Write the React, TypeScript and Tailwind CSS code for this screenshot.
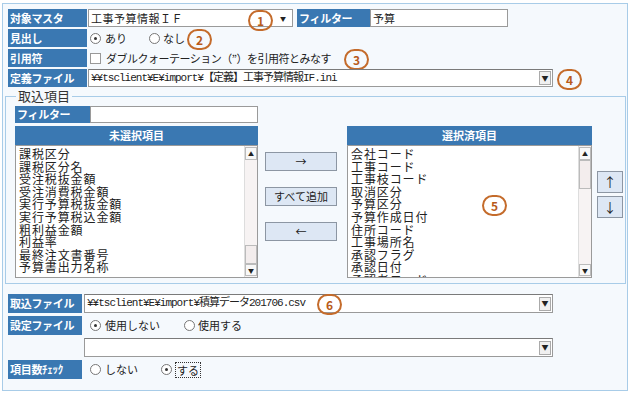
import React from 'react';

const leftItems = [
  '課税区分', '課税区分名', '受注税抜金額', '受注消費税金額', '実行予算税抜金額',
  '実行予算税込金額', '粗利益金額', '利益率', '最終注文書番号', '予算書出力名称',
];

const rightItems = [
  '会社コード', '工事コード', '工事枝コード', '取消区分', '予算区分', '予算作成日付',
  '住所コード', '工事場所名', '承認フラグ', '承認日付', '承認者コード',
];

function Mark({ n, className }: { n: number; className: string }) {
  return (
    <span
      className={`absolute flex h-[21px] w-[25px] items-center justify-center rounded-full border-2 border-[#c46b2b] text-[12px] font-bold leading-none text-[#b85a1a] ${className}`}
    >
      {n}
    </span>
  );
}

function Label({ text, w }: { text: string; w: string }) {
  return (
    <div className={`${w} flex h-full shrink-0 items-center bg-[#3a78b2] pl-[2px] text-[11px] font-bold tracking-[-0.3px] text-white`}>
      {text}
    </div>
  );
}

function Radio({ on }: { on?: boolean }) {
  return (
    <span className="flex h-[11px] w-[11px] items-center justify-center rounded-full border border-[#777] bg-white">
      {on && <span className="h-[3px] w-[3px] rounded-full bg-[#333]" />}
    </span>
  );
}

function SelectBox({ w, text }: { w: string; text?: string }) {
  return (
    <div className={`${w} flex h-full items-center border border-[#9a9a9a] border-t-[#7a7a7a] bg-white`}>
      <span className="flex-1 truncate pl-[2px] font-['Liberation_Mono','Noto_Sans_CJK_JP',monospace] text-[11px] tracking-[-1px] text-[#222]">
        {text}
      </span>
      <span className="mr-[1px] flex h-[14px] w-[12px] items-center justify-center border border-[#aaa] bg-[#f0f0f0] text-[7px] text-[#222]">▼</span>
    </div>
  );
}

function ListBox({ title, items, thumb }: { title: string; items: string[]; thumb: 'top' | 'bottom' }) {
  return (
    <div className="flex w-full flex-col">
      <div className="flex h-[19px] items-center justify-center bg-[#3a78b2] text-[11px] font-bold text-white">{title}</div>
      <div className="flex h-[133px] border border-[#9a9a9a] bg-white">
        <div className="flex-1 overflow-hidden pl-[3px] pt-[2px] text-[12px] leading-[12.6px] tracking-[0.9px] text-[#222]">
          {items.map((it) => (
            <div key={it} className="h-[12.6px]">{it}</div>
          ))}
        </div>
        <div className="flex w-[13px] flex-col border-l border-[#ddd] bg-[#f7f3f3] py-[1px]">
          <span className="flex h-[13px] items-center justify-center border border-[#bbb] bg-[#f8f8f8] text-[6px] text-[#222]">▲</span>
          {thumb === 'top' ? (
            <>
              <span className="h-[29px] border border-[#bbb] bg-[#f3eded]" />
              <span className="flex-1" />
            </>
          ) : (
            <>
              <span className="flex-1" />
              <span className="h-[19px] border border-[#bbb] bg-[#f3eded]" />
            </>
          )}
          <span className="flex h-[12px] items-center justify-center border border-[#bbb] bg-[#f8f8f8] text-[6px] text-[#222]">▼</span>
        </div>
      </div>
    </div>
  );
}

function Btn({ children, className = '' }: { children: React.ReactNode; className?: string }) {
  return (
    <button className={`flex items-center justify-center border border-[#8c96a3] bg-[#dde7f4] text-[11px] text-[#222] ${className}`}>
      {children}
    </button>
  );
}

export default function App() {
  return (
    <div className="h-[394px] w-[630px] bg-white pl-[2px] pt-[3px] font-['Noto_Sans_CJK_JP',sans-serif] text-[#222]">
      <div className="h-[388px] w-[626px] border border-[#a8cce8] bg-[#f5f9fd] px-[2px] pt-[5px]">
        {/* header rows */}
        <div className="flex flex-col gap-[2px] px-[3px]">
          <div className="relative flex h-[18px] items-center">
            <Label text="対象マスタ" w="w-[79px]" />
            <div className="ml-[1px] flex h-full w-[205px] items-center border border-[#9a9a9a] bg-white">
              <span className="flex-1 pl-[2px] text-[11px] tracking-[0.5px]">工事予算情報ＩＦ</span>
              <span className="mr-[6px] text-[6px]">▼</span>
            </div>
            <div className="ml-[4px] h-full">
              <Label text="フィルター" w="w-[73px]" />
            </div>
            <div className="flex h-full w-[138px] items-center border border-[#9a9a9a] bg-white pl-[2px] text-[11px]">予算</div>
            <Mark n={1} className="left-[240px] top-[1px]" />
          </div>

          <div className="relative flex h-[18px] items-center">
            <Label text="見出し" w="w-[79px]" />
            <div className="ml-[3px] flex items-center gap-[4px] text-[11px]">
              <Radio on />
              <span>あり</span>
            </div>
            <div className="ml-[22px] flex items-center gap-[3px] text-[11px]">
              <Radio />
              <span>なし</span>
            </div>
            <Mark n={2} className="left-[179px] top-[0px]" />
          </div>

          <div className="relative flex h-[18px] items-center">
            <Label text="引用符" w="w-[79px]" />
            <span className="ml-[3px] h-[11px] w-[11px] border border-[#999] bg-white" />
            <span className="ml-[5px] text-[11px] tracking-[-0.5px]">ダブルクォーテーション（”）を引用符とみなす</span>
            <Mark n={3} className="left-[336px] top-[0px]" />
          </div>

          <div className="relative flex h-[18px] items-center">
            <Label text="定義ファイル" w="w-[79px]" />
            <div className="ml-[1px] h-full">
              <SelectBox w="w-[465px]" text="¥¥tsclient¥E¥import¥【定義】工事予算情報IF.ini" />
            </div>
            <Mark n={4} className="left-[549px] top-[0px]" />
          </div>
        </div>

        {/* 取込項目 */}
        <fieldset className="mt-[1px] h-[196px] border border-[#a8cce8] pl-[9px] pr-[2px]">
          <legend className="ml-[1px] px-[2px] text-[13px] leading-[16px] text-[#333]">取込項目</legend>
          <div className="relative mt-[2px] flex">
            <div className="flex w-[243px] flex-col">
              <div className="flex h-[17px]">
                <Label text="フィルター" w="w-[75px]" />
                <div className="flex-1 border border-[#9a9a9a] bg-white" />
              </div>
              <div className="mt-[3px]">
                <ListBox title="未選択項目" items={leftItems} thumb="bottom" />
              </div>
            </div>

            <div className="ml-[7px] flex w-[72px] flex-col gap-[16px] pt-[46px]">
              <Btn className="h-[19px]">→</Btn>
              <Btn className="h-[19px]">すべて追加</Btn>
              <Btn className="h-[19px]">←</Btn>
            </div>

            <div className="ml-[10px] w-[245px] pt-[20px]">
              <ListBox title="選択済項目" items={rightItems} thumb="top" />
            </div>

            <div className="ml-[5px] flex w-[26px] flex-col gap-[3px] pt-[65px]">
              <Btn className="h-[22px] text-[13px]">↑</Btn>
              <Btn className="h-[22px] text-[13px]">↓</Btn>
            </div>

            <Mark n={5} className="left-[467px] top-[89px]" />
          </div>
        </fieldset>

        {/* bottom rows */}
        <div className="mt-[10px] flex flex-col gap-[3px] px-[3px]">
          <div className="relative flex h-[19px] items-center">
            <Label text="取込ファイル" w="w-[74px]" />
            <div className="ml-[2px] h-full">
              <SelectBox w="w-[469px]" text="¥¥tsclient¥E¥import¥積算データ201706.csv" />
            </div>
            <Mark n={6} className="left-[309px] top-[0px]" />
          </div>

          <div className="flex h-[19px] items-center">
            <Label text="設定ファイル" w="w-[74px]" />
            <div className="ml-[8px] flex items-center gap-[4px] text-[11px]">
              <Radio on />
              <span>使用しない</span>
            </div>
            <div className="ml-[24px] flex items-center gap-[3px] text-[11px]">
              <Radio />
              <span>使用する</span>
            </div>
          </div>

          <div className="flex h-[19px] items-center">
            <div className="w-[74px] shrink-0" />
            <div className="ml-[2px] h-full">
              <SelectBox w="w-[469px]" />
            </div>
          </div>

          <div className="flex h-[19px] items-center">
            <Label text="項目数ﾁｪｯｸ" w="w-[74px]" />
            <div className="ml-[8px] flex items-center gap-[4px] text-[11px]">
              <Radio />
              <span>しない</span>
            </div>
            <div className="ml-[23px] flex items-center gap-[3px] text-[11px]">
              <Radio on />
              <span className="border border-dotted border-[#333] px-[1px] leading-[14px]">する</span>
            </div>
          </div>
        </div>
      </div>
    </div>
  );
}
